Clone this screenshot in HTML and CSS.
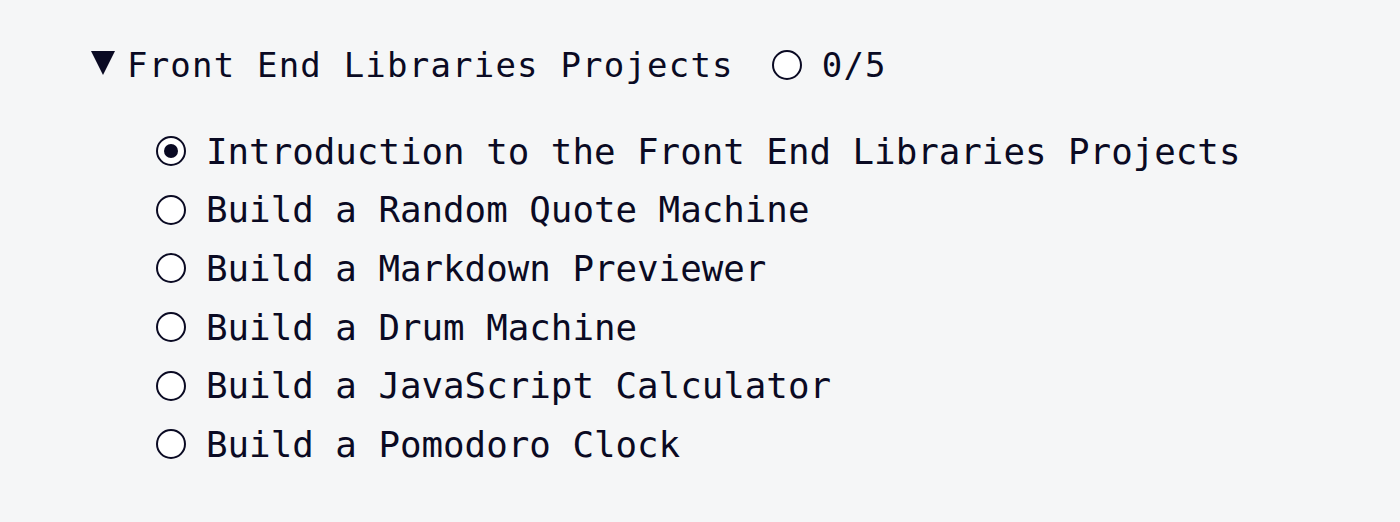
FILE: index.html
```html
<!DOCTYPE html>
<html lang="en">

<head>
    <meta charset="UTF-8">
    <title>Front End Libraries Projects</title>
    <link rel="stylesheet" href="styles.css">
</head>

<body>
    <div class="block">
        <h3 class="block-title">
            <span class="caret"></span>
            <span class="title-text">Front End Libraries Projects</span>
            <span class="radio"></span>
            <span class="count">0/5</span>
        </h3>
        <ul class="challenges">
            <li><span class="radio on"></span>Introduction to the Front End Libraries Projects</li>
            <li><span class="radio"></span>Build a Random Quote Machine</li>
            <li><span class="radio"></span>Build a Markdown Previewer</li>
            <li><span class="radio"></span>Build a Drum Machine</li>
            <li><span class="radio"></span>Build a JavaScript Calculator</li>
            <li><span class="radio"></span>Build a Pomodoro Clock</li>
        </ul>
    </div>
</body>

</html>
```

FILE: styles.css
```css
body {
    margin: 0;
    background: #f5f6f7;
    color: #0a0a23;
    font-family: "DejaVu Sans Mono", "Liberation Mono", monospace;
    font-size: 35.8px;
}

.block {
    padding: 36px 0 0 91px;
}

.block-title {
    display: flex;
    align-items: center;
    margin: 0;
    height: 58px;
    font-size: 34px;
    letter-spacing: 1.2px;
    font-weight: normal;
}

/* triangle made of borders */
.caret {
    width: 0;
    height: 0;
    border-left: 12.5px solid transparent;
    border-right: 12.5px solid transparent;
    border-top: 24px solid #0a0a23;
    margin-right: 12px;
    margin-top: -4px;
}

.title-text {
    margin-right: 38px;
}

.radio {
    box-sizing: border-box;
    width: 30px;
    height: 30px;
    border: 2px solid #0a0a23;
    border-radius: 50%;
    background: #fff;
    flex: none;
    margin-right: 20px;
    position: relative;
}

.radio.on::after {
    content: "";
    position: absolute;
    left: 6px;
    top: 6px;
    width: 14px;
    height: 14px;
    border-radius: 50%;
    background: #0a0a23;
}

.challenges {
    margin: 28px 0 0;
    padding: 0 0 0 65px;
    list-style: none;
}

.challenges li {
    display: flex;
    align-items: center;
    height: 58.6px;
}
```
